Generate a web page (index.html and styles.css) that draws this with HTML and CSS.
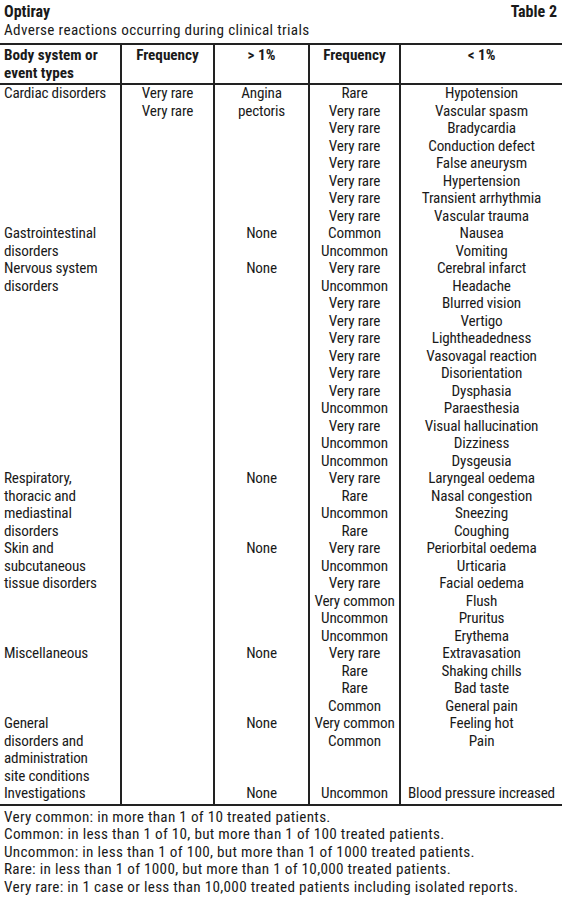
FILE: index.html
```html
<!DOCTYPE html>
<html lang="en">
<head>
  <meta charset="UTF-8" />
  <title>Optiray - Table 2</title>
  <link rel="stylesheet" href="styles.css">
</head>
<body>
  <div class="title-row">
    <span class="title">Optiray</span>
    <span class="title">Table 2</span>
  </div>
  <p class="subtitle">Adverse reactions occurring during clinical trials</p>

  <table class="reactions">
    <colgroup>
      <col class="c1"><col class="c2"><col class="c3"><col class="c4"><col class="c5">
    </colgroup>
    <thead>
      <tr>
        <th class="left">Body system or<br>event types</th>
        <th>Frequency</th>
        <th>&gt; 1%</th>
        <th>Frequency</th>
        <th>&lt; 1%</th>
      </tr>
    </thead>
    <tbody>
      <tr>
        <td class="left">Cardiac disorders</td>
        <td>Very rare<br>Very rare</td>
        <td>Angina<br>pectoris</td>
        <td>Rare<br>Very rare<br>Very rare<br>Very rare<br>Very rare<br>Very rare<br>Very rare<br>Very rare</td>
        <td>Hypotension<br>Vascular spasm<br>Bradycardia<br>Conduction defect<br>False aneurysm<br>Hypertension<br>Transient arrhythmia<br>Vascular trauma</td>
      </tr>
      <tr>
        <td class="left">Gastrointestinal<br>disorders</td>
        <td></td>
        <td>None</td>
        <td>Common<br>Uncommon</td>
        <td>Nausea<br>Vomiting</td>
      </tr>
      <tr>
        <td class="left">Nervous system<br>disorders</td>
        <td></td>
        <td>None</td>
        <td>Very rare<br>Uncommon<br>Very rare<br>Very rare<br>Very rare<br>Very rare<br>Very rare<br>Very rare<br>Uncommon<br>Very rare<br>Uncommon<br>Uncommon</td>
        <td>Cerebral infarct<br>Headache<br>Blurred vision<br>Vertigo<br>Lightheadedness<br>Vasovagal reaction<br>Disorientation<br>Dysphasia<br>Paraesthesia<br>Visual hallucination<br>Dizziness<br>Dysgeusia</td>
      </tr>
      <tr>
        <td class="left">Respiratory,<br>thoracic and<br>mediastinal<br>disorders</td>
        <td></td>
        <td>None</td>
        <td>Very rare<br>Rare<br>Uncommon<br>Rare</td>
        <td>Laryngeal oedema<br>Nasal congestion<br>Sneezing<br>Coughing</td>
      </tr>
      <tr>
        <td class="left">Skin and<br>subcutaneous<br>tissue disorders</td>
        <td></td>
        <td>None</td>
        <td>Very rare<br>Uncommon<br>Very rare<br>Very common<br>Uncommon<br>Uncommon</td>
        <td>Periorbital oedema<br>Urticaria<br>Facial oedema<br>Flush<br>Pruritus<br>Erythema</td>
      </tr>
      <tr>
        <td class="left">Miscellaneous</td>
        <td></td>
        <td>None</td>
        <td>Very rare<br>Rare<br>Rare<br>Common</td>
        <td>Extravasation<br>Shaking chills<br>Bad taste<br>General pain</td>
      </tr>
      <tr>
        <td class="left">General<br>disorders and<br>administration<br>site conditions</td>
        <td></td>
        <td>None</td>
        <td>Very common<br>Common</td>
        <td>Feeling hot<br>Pain</td>
      </tr>
      <tr class="last">
        <td class="left">Investigations</td>
        <td></td>
        <td>None</td>
        <td>Uncommon</td>
        <td>Blood pressure increased</td>
      </tr>
    </tbody>
  </table>

  <div class="notes">
    <p>Very common: in more than 1 of 10 treated patients.</p>
    <p>Common: in less than 1 of 10, but more than 1 of 100 treated patients.</p>
    <p>Uncommon: in less than 1 of 100, but more than 1 of 1000 treated patients.</p>
    <p>Rare: in less than 1 of 1000, but more than 1 of 10,000 treated patients.</p>
    <p>Very rare: in 1 case or less than 10,000 treated patients including isolated reports.</p>
  </div>
</body>
</html>
```

FILE: styles.css
```css
body {
  margin: 0;
  padding: 0;
  background: #fff;
  color: #1a1a1a;
  font-family: Roboto, "Liberation Sans", Arial, sans-serif;
  font-stretch: condensed;
  font-size: 15.2px;
  line-height: 17.5px;
  width: 562px;
}
.title-row {
  display: flex;
  justify-content: space-between;
  padding: 3px 5px 0 4px;
}
.title {
  font-weight: bold;
  font-size: 16px;
}
.subtitle {
  margin: 1px 0 0 4px;
  letter-spacing: 0.33px;
}
.reactions {
  width: 562px;
  margin-top: 4px;
  border-collapse: collapse;
  table-layout: fixed;
  border-top: 2px solid #222;
  border-bottom: 2px solid #222;
}
.c1 { width: 121px; }
.c2 { width: 93px; }
.c3 { width: 95px; }
.c4 { width: 91px; }
.c5 { width: 162px; }
th, td {
  padding: 0;
  text-align: center;
  vertical-align: top;
  border-left: 2px solid #222;
  white-space: nowrap;
}
td {
  letter-spacing: -0.2px;
}
th:first-child, td:first-child {
  border-left: none;
}
th {
  font-weight: bold;
  padding: 2px 0 1px;
  border-bottom: 2px solid #222;
}
.left {
  text-align: left;
  padding-left: 4px;
}
.last td {
  padding-bottom: 1px;
}
.notes {
  padding: 3px 0 0 4px;
  letter-spacing: 0.29px;
}
.notes p {
  margin: 0;
}
```
